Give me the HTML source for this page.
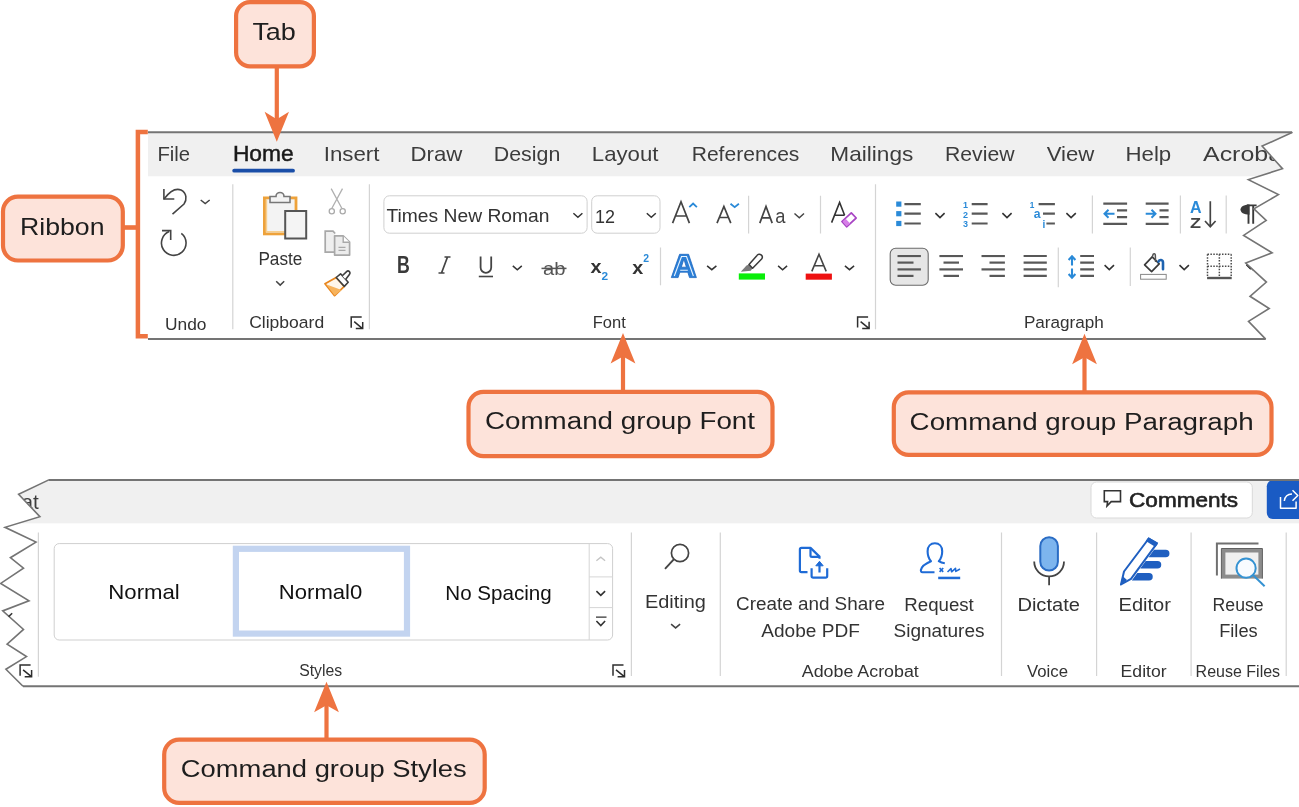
<!DOCTYPE html>
<html><head><meta charset="utf-8"><style>
html,body{margin:0;padding:0;background:#fff;width:1299px;height:807px;overflow:hidden}
svg{display:block;font-family:"Liberation Sans", sans-serif;will-change:transform}
</style></head><body>
<svg width="1299" height="807" viewBox="0 0 1299 807">
<defs><clipPath id="cpTop"><path d="M148,132.5 L1292.1,132.5 L1262.1,146.1 L1282.5,168.7 L1248.4,179.6 L1278.4,194.6 L1253.9,208.9 L1266.2,220.5 L1243.6,235.4 L1272.1,252.8 L1245.7,263.1 L1266.4,282.1 L1250,296.3 L1269.2,308.5 L1248.5,321.3 L1265.7,339.1 L148,339.1 Z"/></clipPath>
<clipPath id="cpBot"><path d="M1299,480.1 L48.3,480.1 L18.6,494.2 L39.9,516.7 L5.0,527.3 L36,542.1 L10.4,557.7 L23.5,568.1 L0.7,583.4 L29,600.8 L2.7,610.9 L23.5,629.4 L7.1,644.2 L26.5,656.6 L5.9,669.2 L23,686.3 L1299,686.3 Z"/></clipPath></defs>
<g clip-path="url(#cpTop)">
<rect x="148" y="132.5" width="1160" height="44" fill="#f0f0f0"/>
<rect x="148" y="176.5" width="1160" height="163" fill="#ffffff"/>
<text x="157.4" y="160.5" font-size="20.67" textLength="32.7" lengthAdjust="spacingAndGlyphs" fill="#3c3c3c">File</text>
<text x="232.9" y="160.7" font-size="21.37" textLength="60.8" lengthAdjust="spacingAndGlyphs" fill="#1a1a1a" stroke="#1a1a1a" stroke-width="0.45">Home</text>
<text x="323.7" y="160.5" font-size="20.67" textLength="55.8" lengthAdjust="spacingAndGlyphs" fill="#3c3c3c">Insert</text>
<text x="410.5" y="160.5" font-size="20.67" textLength="51.9" lengthAdjust="spacingAndGlyphs" fill="#3c3c3c">Draw</text>
<text x="493.7" y="160.5" font-size="20.67" textLength="66.6" lengthAdjust="spacingAndGlyphs" fill="#3c3c3c">Design</text>
<text x="591.8" y="160.5" font-size="20.67" textLength="66.7" lengthAdjust="spacingAndGlyphs" fill="#3c3c3c">Layout</text>
<text x="691.7" y="160.5" font-size="20.67" textLength="107.7" lengthAdjust="spacingAndGlyphs" fill="#3c3c3c">References</text>
<text x="830.3" y="160.5" font-size="20.67" textLength="83.0" lengthAdjust="spacingAndGlyphs" fill="#3c3c3c">Mailings</text>
<text x="945.0" y="160.5" font-size="20.67" textLength="69.5" lengthAdjust="spacingAndGlyphs" fill="#3c3c3c">Review</text>
<text x="1046.7" y="160.5" font-size="20.67" textLength="47.7" lengthAdjust="spacingAndGlyphs" fill="#3c3c3c">View</text>
<text x="1125.5" y="160.5" font-size="20.67" textLength="45.7" lengthAdjust="spacingAndGlyphs" fill="#3c3c3c">Help</text>
<text x="1203.0" y="160.5" font-size="20.67" textLength="86.0" lengthAdjust="spacingAndGlyphs" fill="#3c3c3c">Acrobat</text>
<rect x="232.3" y="168.8" width="62.6" height="3.8" rx="1.9" fill="#1a4ea8"/>
<path d="M164,199 C170,191 176,188 181,190 C187,193 187,200 184,204 L172.5,214.2" fill="none" stroke="#444" stroke-width="1.6"/>
<path d="M163.9,188.9 V199 H174.3" fill="none" stroke="#444" stroke-width="1.6"/>
<path d="M200.7,200.0 L205.2,203.6 L209.7,200.0" fill="none" stroke="#444" stroke-width="1.5"/>
<path d="M181.3,233.3 A12.3,12.3 0 1 1 169.2,231.6" fill="none" stroke="#444" stroke-width="1.6"/>
<path d="M162,230.6 H170.7 V240" fill="none" stroke="#444" stroke-width="1.6"/>
<text x="165.0" y="329.9" font-size="17.04" textLength="41.5" lengthAdjust="spacingAndGlyphs" fill="#333">Undo</text>
<line x1="232.8" y1="184.2" x2="232.8" y2="329.3" stroke="#d4d4d4" stroke-width="1.2"/>
<rect x="264.4" y="197.9" width="31.6" height="36" fill="#f3f3f3" stroke="#eea23a" stroke-width="2.8"/>
<path d="M266.6,199 V231.7 H285" fill="none" stroke="#f7cf8f" stroke-width="1.2"/>
<path d="M270,202.5 V196.5 H276 A4,4 0 0 1 284,196.5 H290 V202.5 Z" fill="#f3f3f3" stroke="#777" stroke-width="1.6"/>
<rect x="285.2" y="211" width="21" height="27.5" fill="#f4f4f4" stroke="#555" stroke-width="2"/>
<text x="258.4" y="265.2" font-size="18.02" textLength="44.0" lengthAdjust="spacingAndGlyphs" fill="#333">Paste</text>
<path d="M276.2,281.3 L280.2,285.1 L284.2,281.3" fill="none" stroke="#444" stroke-width="1.5"/>
<path d="M331.2,188.6 L341.8,208.3 M342.5,188.6 L331.9,208.3" fill="none" stroke="#b0b0b0" stroke-width="1.3"/>
<circle cx="331.8" cy="211.2" r="2.6" fill="none" stroke="#aaa" stroke-width="1.3"/><circle cx="342.7" cy="211.2" r="2.6" fill="none" stroke="#aaa" stroke-width="1.3"/>
<path d="M334,252.2 H325.2 V231.2 H333 L335.2,233.5" fill="#efefef" stroke="#a8a8a8" stroke-width="1.7"/>
<path d="M334.6,235.9 H343.2 L349.6,242.2 V255.1 H334.6 Z" fill="#ececec" stroke="#a8a8a8" stroke-width="1.7" stroke-linejoin="round"/>
<path d="M343.2,236 V242.3 H349.6" fill="#fff" stroke="#a8a8a8" stroke-width="1.4"/><path d="M338.5,247.3 H345.5 M338.5,250.3 H345.5" stroke="#a8a8a8" stroke-width="1.3"/>
<path d="M325,283.7 L336.2,277.5 L344.3,286.4 L334.6,295.6 Z" fill="#fff6ea" stroke="#e8861e" stroke-width="1.8" stroke-linejoin="round"/>
<path d="M326,284.2 L341.5,290 L334.6,295.6 Z" fill="#f7b35c"/>
<path d="M336.2,277.5 L340.6,273.8 L348.2,282.2 L344.3,286.4 Z" fill="#fff" stroke="#3f3f3f" stroke-width="1.6" stroke-linejoin="round"/>
<path d="M342.3,275.8 L346.6,271.6 A1.7,1.7 0 0 1 349.4,274.4 L345.6,279.4" fill="#fff" stroke="#3f3f3f" stroke-width="1.6" stroke-linejoin="round"/>
<text x="249.2" y="327.9" font-size="16.76" textLength="75.0" lengthAdjust="spacingAndGlyphs" fill="#333">Clipboard</text>
<path d="M351.2,327.70000000000005 V317.0 H361.7" fill="none" stroke="#2e2e2e" stroke-width="1.5"/>
<path d="M354.2,321.70000000000005 L362.2,328.3 M362.7,321.90000000000003 V328.6 H355.79999999999995" fill="none" stroke="#2e2e2e" stroke-width="1.5"/>
<line x1="369.4" y1="184.2" x2="369.4" y2="329.3" stroke="#d4d4d4" stroke-width="1.2"/>
<rect x="383.9" y="195.8" width="203.2" height="37.4" rx="5.5" fill="#fff" stroke="#cfcfcf" stroke-width="1"/>
<text x="386.5" y="222.4" font-size="19.27" textLength="163.0" lengthAdjust="spacingAndGlyphs" fill="#333">Times New Roman</text>
<path d="M573.4,213.2 L577.9,217.2 L582.4,213.2" fill="none" stroke="#333" stroke-width="1.5"/>
<rect x="591.7" y="195.8" width="68.3" height="37.4" rx="5.5" fill="#fff" stroke="#cfcfcf" stroke-width="1"/>
<text x="594.9" y="222.6" font-size="19.27" textLength="20.0" lengthAdjust="spacingAndGlyphs" fill="#333">12</text>
<path d="M646.8,213.2 L651.3,217.2 L655.8,213.2" fill="none" stroke="#333" stroke-width="1.5"/>
<path d="M672.6,223.1 L681,201.8 L689.4,223.1 M675.5,216 H686.5" fill="none" stroke="#444" stroke-width="1.7"/>
<path d="M689.3,207.2 L693.1,203.5 L696.9,207.2" fill="none" stroke="#2a8ad8" stroke-width="1.8"/>
<path d="M717,223.1 L723.9,206.4 L730.8,223.1 M719.3,217.5 H728.5" fill="none" stroke="#444" stroke-width="1.7"/>
<path d="M730.5,203.7 L734.7,207.2 L738.9,203.7" fill="none" stroke="#2a8ad8" stroke-width="1.8"/>
<line x1="748.6" y1="195.7" x2="748.6" y2="233.6" stroke="#d4d4d4" stroke-width="1.2"/>
<path d="M759.8,223.1 L766,206.4 L772.2,223.1 M761.8,217.8 H770.2" fill="none" stroke="#444" stroke-width="1.7"/>
<text x="775.2" y="223.1" font-size="20.50" textLength="10.2" lengthAdjust="spacingAndGlyphs" fill="#444">a</text>
<path d="M794.5,213.5 L799.3,217.7 L804.0,213.5" fill="none" stroke="#444" stroke-width="1.5"/>
<line x1="820.5" y1="195.7" x2="820.5" y2="233.6" stroke="#d4d4d4" stroke-width="1.2"/>
<path d="M831.6,222.6 L839.6,202.5 L844.6,215.2 M834.6,215.2 H844.6" fill="none" stroke="#333" stroke-width="1.6"/>
<path d="M841.9,221.5 L851.3,212.8 L856.2,218 L846.6,226.8 Z" fill="#fff" stroke="#a845c4" stroke-width="1.7" stroke-linejoin="round"/>
<path d="M842.6,221.5 L845.6,218.7 L850.2,223.6 L846.6,226.3 Z" fill="#d77ee8"/>
<text x="397.0" y="273.3" font-size="23.18" textLength="12.8" lengthAdjust="spacingAndGlyphs" font-weight="bold" fill="#3a3a3a">B</text>
<path d="M444.5,257 H450.5 M438.5,273 H444.5 M447.5,257 L441.5,273" fill="none" stroke="#444" stroke-width="1.7"/>
<path d="M480.6,256.6 V267.5 A5.3,5.3 0 0 0 491.2,267.5 V256.6" fill="none" stroke="#444" stroke-width="1.8"/>
<path d="M478.8,276.5 H493" stroke="#444" stroke-width="1.6"/>
<path d="M512.8,265.9 L517.3,269.7 L521.8,265.9" fill="none" stroke="#333" stroke-width="1.5"/>
<text x="543.0" y="275.0" font-size="19.00" textLength="22.5" lengthAdjust="spacingAndGlyphs" fill="#555">ab</text>
<path d="M541.5,268.4 H566.5" stroke="#555" stroke-width="1.5"/>
<text x="590.4" y="273.4" font-size="19.00" textLength="11.0" lengthAdjust="spacingAndGlyphs" font-weight="bold" fill="#333">x</text>
<text x="601.6" y="279.7" font-size="11.50" textLength="6.6" lengthAdjust="spacingAndGlyphs" font-weight="bold" fill="#2a8ad8">2</text>
<text x="632.2" y="273.6" font-size="19.00" textLength="11.0" lengthAdjust="spacingAndGlyphs" font-weight="bold" fill="#333">x</text>
<text x="643.3" y="262.2" font-size="10.50" textLength="5.8" lengthAdjust="spacingAndGlyphs" font-weight="bold" fill="#2a8ad8">2</text>
<line x1="660.5" y1="247.4" x2="660.5" y2="285.3" stroke="#d4d4d4" stroke-width="1.2"/>
<path d="M671.3,277.6 L679.6,254.3 H688.6 L696.4,277.6 H689.5 L687.8,272.2 H679.8 L678.1,277.6 Z M681.3,267.2 H686.4 L683.9,259 Z" fill="#2b7fd6" fill-rule="evenodd" stroke="#1f68c0" stroke-width="0.8"/>
<path d="M674.3,276 L681.5,256.5 H686.5 L693.4,276 M680.2,270.2 H687.8" fill="none" stroke="#e8f3ff" stroke-width="1.1"/>
<path d="M707.1,265.9 L711.8,269.7 L716.4,265.9" fill="none" stroke="#333" stroke-width="1.5"/>
<path d="M740.8,271.7 L746.5,265.6 L749,264.4 L752.6,268.2 L750.8,270.8 Z" fill="#7a7a7a"/>
<path d="M749,264.4 L757,255.4 A2.9,2.9 0 0 1 761.6,259 L752.6,268.2 Z" fill="#fff" stroke="#3a3a3a" stroke-width="1.5" stroke-linejoin="round"/>
<rect x="738.8" y="273.4" width="26.2" height="6.2" fill="#08ee08"/>
<path d="M778.1,265.9 L782.6,269.7 L787.1,265.9" fill="none" stroke="#333" stroke-width="1.5"/>
<path d="M811.8,271.4 L819,254.3 L826.2,271.4 M814.2,265.8 H823.8" fill="none" stroke="#444" stroke-width="1.6"/>
<rect x="805.7" y="273.6" width="26.2" height="6.1" fill="#ee1111"/>
<path d="M844.9,265.9 L849.5,269.7 L854.1,265.9" fill="none" stroke="#333" stroke-width="1.5"/>
<text x="592.8" y="328.0" font-size="16.76" textLength="33.0" lengthAdjust="spacingAndGlyphs" fill="#333">Font</text>
<path d="M857.5999999999999,327.6 V316.9 H868.0999999999999" fill="none" stroke="#2e2e2e" stroke-width="1.5"/>
<path d="M860.5999999999999,321.6 L868.5999999999999,328.2 M869.0999999999999,321.8 V328.5 H862.1999999999999" fill="none" stroke="#2e2e2e" stroke-width="1.5"/>
<line x1="875.5" y1="184.2" x2="875.5" y2="329.3" stroke="#d4d4d4" stroke-width="1.2"/>
<rect x="896.2" y="201.5" width="5.2" height="5.2" fill="#2a8ad8"/>
<rect x="896.2" y="211.1" width="5.2" height="5.2" fill="#2a8ad8"/>
<rect x="896.2" y="220.9" width="5.2" height="5.2" fill="#2a8ad8"/>
<path d="M904.4,204.1 H920.8" stroke="#585858" stroke-width="2.2"/>
<path d="M904.4,213.7 H920.8" stroke="#585858" stroke-width="2.2"/>
<path d="M904.4,223.5 H920.8" stroke="#585858" stroke-width="2.2"/>
<path d="M935.4,213.1 L940.0,217.6 L944.6,213.1" fill="none" stroke="#333" stroke-width="1.6"/>
<text x="963.1" y="207.8" font-size="9.40" textLength="5.0" lengthAdjust="spacingAndGlyphs" font-weight="bold" fill="#2a8ad8">1</text>
<text x="963.1" y="217.6" font-size="9.40" textLength="5.0" lengthAdjust="spacingAndGlyphs" font-weight="bold" fill="#2a8ad8">2</text>
<text x="963.1" y="227.4" font-size="9.40" textLength="5.0" lengthAdjust="spacingAndGlyphs" font-weight="bold" fill="#2a8ad8">3</text>
<path d="M971.7,204.1 H987.6" stroke="#585858" stroke-width="2.2"/>
<path d="M971.7,213.7 H987.6" stroke="#585858" stroke-width="2.2"/>
<path d="M971.7,223.5 H987.6" stroke="#585858" stroke-width="2.2"/>
<path d="M1002.4,213.1 L1007.0,217.6 L1011.6,213.1" fill="none" stroke="#333" stroke-width="1.6"/>
<text x="1029.8" y="207.9" font-size="9.40" textLength="4.6" lengthAdjust="spacingAndGlyphs" font-weight="bold" fill="#2a8ad8">1</text>
<text x="1033.8" y="217.7" font-size="12.00" textLength="6.8" lengthAdjust="spacingAndGlyphs" font-weight="bold" fill="#2a8ad8">a</text>
<text x="1042.6" y="227.5" font-size="11.00" textLength="2.8" lengthAdjust="spacingAndGlyphs" font-weight="bold" fill="#2a8ad8">i</text>
<path d="M1038.6,204.1 H1054.9" stroke="#585858" stroke-width="2.2"/>
<path d="M1043,213.7 H1054.9" stroke="#585858" stroke-width="2.2"/>
<path d="M1046.4,223.5 H1054.9" stroke="#585858" stroke-width="2.2"/>
<path d="M1066.4,213.1 L1071.1,217.6 L1075.8,213.1" fill="none" stroke="#333" stroke-width="1.6"/>
<line x1="1092.4" y1="195.5" x2="1092.4" y2="233.5" stroke="#d4d4d4" stroke-width="1.2"/>
<path d="M1103.3,203.6 H1127.1" stroke="#585858" stroke-width="2.2"/>
<path d="M1103.3,223.8 H1127.1" stroke="#585858" stroke-width="2.2"/>
<path d="M1117,210.3 H1127.1" stroke="#585858" stroke-width="2.2"/>
<path d="M1117,217.1 H1127.1" stroke="#585858" stroke-width="2.2"/>
<path d="M1104.5,213.7 H1114.5 M1108.5,209.7 L1104.5,213.7 L1108.5,217.7" fill="none" stroke="#2a8ad8" stroke-width="2"/>
<path d="M1145.7,203.6 H1168.6" stroke="#585858" stroke-width="2.2"/>
<path d="M1145.7,223.8 H1168.6" stroke="#585858" stroke-width="2.2"/>
<path d="M1159.5,210.3 H1168.6" stroke="#585858" stroke-width="2.2"/>
<path d="M1159.5,217.1 H1168.6" stroke="#585858" stroke-width="2.2"/>
<path d="M1145.7,213.7 H1155.5 M1151.5,209.7 L1155.5,213.7 L1151.5,217.7" fill="none" stroke="#2a8ad8" stroke-width="2"/>
<line x1="1180.4" y1="195.5" x2="1180.4" y2="233.5" stroke="#d4d4d4" stroke-width="1.2"/>
<text x="1189.9" y="213.3" font-size="16.80" textLength="11.6" lengthAdjust="spacingAndGlyphs" font-weight="bold" fill="#2a8ad8">A</text>
<text x="1190.0" y="227.8" font-size="15.00" textLength="11.0" lengthAdjust="spacingAndGlyphs" font-weight="bold" fill="#444">Z</text>
<path d="M1210.3,201.2 V226.5 M1205,221 L1210.3,226.8 L1215.6,221" fill="none" stroke="#444" stroke-width="1.7"/>
<line x1="1226.2" y1="195.5" x2="1226.2" y2="233.5" stroke="#d4d4d4" stroke-width="1.2"/>
<path d="M1249.5,204.4 C1243.6,204.4 1240.5,206.8 1240.5,209.6 C1240.5,212.5 1243.6,214.8 1249.5,214.8 Z" fill="#3a3a3a"/>
<path d="M1247,205.4 H1256.6 M1248.5,205 V223.8 M1253.2,205 V223.8" fill="none" stroke="#3a3a3a" stroke-width="1.9"/>
<rect x="890.2" y="248.2" width="38" height="37.1" rx="5.5" fill="#e6e6e6" stroke="#6a6a6a" stroke-width="1.1"/>
<path d="M897.5,256 H920.9" stroke="#585858" stroke-width="2.2"/>
<path d="M897.5,269.4 H920.9" stroke="#585858" stroke-width="2.2"/>
<path d="M897.5,262.6 H913.5" stroke="#585858" stroke-width="2.2"/>
<path d="M897.5,275.9 H913.5" stroke="#585858" stroke-width="2.2"/>
<path d="M939.4,256 H963" stroke="#585858" stroke-width="2.2"/>
<path d="M939.4,269.4 H963" stroke="#585858" stroke-width="2.2"/>
<path d="M943.5,262.6 H959" stroke="#585858" stroke-width="2.2"/>
<path d="M943.5,275.9 H959" stroke="#585858" stroke-width="2.2"/>
<path d="M981.5,256 H1004.9" stroke="#585858" stroke-width="2.2"/>
<path d="M981.5,269.4 H1004.9" stroke="#585858" stroke-width="2.2"/>
<path d="M989.5,262.6 H1004.9" stroke="#585858" stroke-width="2.2"/>
<path d="M989.5,275.9 H1004.9" stroke="#585858" stroke-width="2.2"/>
<path d="M1023.6,256 H1046.8" stroke="#585858" stroke-width="2.2"/>
<path d="M1023.6,262.6 H1046.8" stroke="#585858" stroke-width="2.2"/>
<path d="M1023.6,269.4 H1046.8" stroke="#585858" stroke-width="2.2"/>
<path d="M1023.6,275.9 H1046.8" stroke="#585858" stroke-width="2.2"/>
<line x1="1058.3" y1="247.4" x2="1058.3" y2="287.2" stroke="#d4d4d4" stroke-width="1.2"/>
<path d="M1080.2,256 H1094" stroke="#585858" stroke-width="2.2"/>
<path d="M1080.2,262.6 H1094" stroke="#585858" stroke-width="2.2"/>
<path d="M1080.2,269.4 H1094" stroke="#585858" stroke-width="2.2"/>
<path d="M1080.2,275.9 H1094" stroke="#585858" stroke-width="2.2"/>
<path d="M1072,257 V265.4 M1072,268.4 V277 M1068.6,260 L1072,256.4 L1075.4,260 M1068.6,274 L1072,277.6 L1075.4,274" fill="none" stroke="#2a8ad8" stroke-width="2.1"/>
<path d="M1104.6,265.1 L1109.3,269.6 L1114.0,265.1" fill="none" stroke="#333" stroke-width="1.6"/>
<line x1="1130.3" y1="247.4" x2="1130.3" y2="286" stroke="#d4d4d4" stroke-width="1.2"/>
<path d="M1144.6,264.9 L1152.2,256.9 L1159.2,263.8 L1151.6,271.6 Z" fill="#fff" stroke="#3a3a3a" stroke-width="1.7" stroke-linejoin="round"/>
<path d="M1152.2,256.9 L1153.2,254.2 A1.2,1.2 0 0 1 1155.3,254.6 L1155.6,262" fill="none" stroke="#555" stroke-width="1.5"/>
<path d="M1158.4,261.6 C1159.6,259.2 1162.9,259.4 1163,262.5 V269.2" fill="none" stroke="#1e63b0" stroke-width="2.6" stroke-linecap="round"/>
<rect x="1140.6" y="274.4" width="25.6" height="4.8" fill="#fff" stroke="#888" stroke-width="1"/>
<path d="M1179.5,265.1 L1184.2,269.6 L1188.9,265.1" fill="none" stroke="#333" stroke-width="1.6"/>
<path d="M1207.5,254.3 H1231.2 M1207.5,266.2 H1231.2 M1207.5,254.3 V277 M1219.35,254.3 V277 M1231.2,254.3 V277" fill="none" stroke="#4a4a4a" stroke-width="1.5" stroke-dasharray="1.5,1.4"/>
<rect x="1207.1" y="276.8" width="24.6" height="2.4" fill="#555"/>
<path d="M1248.3,265.1 L1253.0,269.6 L1257.7,265.1" fill="none" stroke="#333" stroke-width="1.6"/>
<path d="M1246.5,264.5 L1251,269" stroke="#222" stroke-width="1.8"/>
<text x="1023.9" y="327.8" font-size="16.76" textLength="80.0" lengthAdjust="spacingAndGlyphs" fill="#333">Paragraph</text>
</g>
<path d="M148,132.3 H1292.1" fill="none" stroke="#747474" stroke-width="2"/>
<path d="M148,339.1 H1265.7" fill="none" stroke="#747474" stroke-width="2"/>
<path d="M1292.1,132.3 L1292.1,132.5 L1262.1,146.1 L1282.5,168.7 L1248.4,179.6 L1278.4,194.6 L1253.9,208.9 L1266.2,220.5 L1243.6,235.4 L1272.1,252.8 L1245.7,263.1 L1266.4,282.1 L1250,296.3 L1269.2,308.5 L1248.5,321.3 L1265.7,339.1" fill="none" stroke="#747474" stroke-width="1.6" stroke-linejoin="miter"/>
<g clip-path="url(#cpBot)">
<rect x="0" y="480.1" width="1299" height="43.5" fill="#f0f0f0"/>
<rect x="0" y="523.6" width="1299" height="163" fill="#ffffff"/>
<text x="21.5" y="508.5" font-size="20.67" textLength="17.3" lengthAdjust="spacingAndGlyphs" fill="#3c3c3c">at</text>
<line x1="38.4" y1="532.5" x2="38.4" y2="676.7" stroke="#d4d4d4" stroke-width="1.2"/>
<path d="M20.1,675.8000000000001 V665.1 H30.6" fill="none" stroke="#2e2e2e" stroke-width="1.5"/>
<path d="M23.1,669.8000000000001 L31.1,676.4000000000001 M31.6,670.0 V676.7 H24.700000000000003" fill="none" stroke="#2e2e2e" stroke-width="1.5"/>
<rect x="54.2" y="543.6" width="558.4" height="96.4" rx="5" fill="#fff" stroke="#cfcfcf" stroke-width="1"/>
<rect x="235.9" y="548.8" width="171.1" height="84.8" fill="#fff" stroke="#c3d4f0" stroke-width="6.2"/>
<text x="108.3" y="598.8" font-size="20.25" textLength="71.5" lengthAdjust="spacingAndGlyphs" fill="#111">Normal</text>
<text x="278.8" y="599.3" font-size="20.25" textLength="83.5" lengthAdjust="spacingAndGlyphs" fill="#111">Normal0</text>
<text x="445.3" y="599.5" font-size="20.25" textLength="106.5" lengthAdjust="spacingAndGlyphs" fill="#111">No Spacing</text>
<path d="M589.2,544 V640 M589.2,576.9 H612.6 M589.2,607.6 H612.6" stroke="#d6d6d6" stroke-width="1"/>
<path d="M596.4,560.8 L600.8,557.2 L605.1,560.8" fill="none" stroke="#c4c4c4" stroke-width="1.3"/>
<path d="M596.4,591.1 L600.8,595.4 L605.1,591.1" fill="none" stroke="#333" stroke-width="1.6"/>
<path d="M596,617.2 H606.5" stroke="#333" stroke-width="1.3"/>
<path d="M596.4,621.0 L600.8,625.6 L605.1,621.0" fill="none" stroke="#333" stroke-width="1.6"/>
<text x="299.2" y="676.4" font-size="16.76" textLength="43.0" lengthAdjust="spacingAndGlyphs" fill="#333">Styles</text>
<path d="M613.0,675.8000000000001 V665.1 H623.5" fill="none" stroke="#2e2e2e" stroke-width="1.5"/>
<path d="M616.0,669.8000000000001 L624.0,676.4000000000001 M624.5,670.0 V676.7 H617.6" fill="none" stroke="#2e2e2e" stroke-width="1.5"/>
<line x1="631.4" y1="532.5" x2="631.4" y2="676" stroke="#d4d4d4" stroke-width="1.2"/>
<circle cx="680" cy="553" r="8.6" fill="none" stroke="#444" stroke-width="1.7"/>
<path d="M674,559.2 L665,568.8" stroke="#444" stroke-width="1.9"/>
<text x="644.9" y="608.0" font-size="18.58" textLength="61.0" lengthAdjust="spacingAndGlyphs" fill="#333">Editing</text>
<path d="M671.1,624.1 L675.6,627.9 L680.1,624.1" fill="none" stroke="#444" stroke-width="1.5"/>
<line x1="720.3" y1="532.5" x2="720.3" y2="676" stroke="#d4d4d4" stroke-width="1.2"/>
<path d="M807.5,572.2 H801.5 Q799.9,572.2 799.9,570.6 V549.5 Q799.9,547.9 801.5,547.9 H810.5 L819.5,556.6 V558.7" fill="none" stroke="#1f6bd6" stroke-width="2.2" stroke-linejoin="round"/>
<path d="M810.5,548.2 V555.5 Q810.5,556.9 812,556.9 H819.3" fill="none" stroke="#1f6bd6" stroke-width="2.2"/>
<path d="M811.6,568.2 V576 Q811.6,577.6 813.2,577.6 H825.6 Q827.2,577.6 827.2,576 V568.2 M819.5,572.4 V564" fill="none" stroke="#1f6bd6" stroke-width="2.2" stroke-linejoin="round"/>
<path d="M815.8,565.8 L819.5,561.3 L823.2,565.8 Z" fill="#1f6bd6" stroke="#1f6bd6" stroke-width="1" stroke-linejoin="round"/>
<text x="736.0" y="610.1" font-size="18.30" textLength="149.0" lengthAdjust="spacingAndGlyphs" fill="#333">Create and Share</text>
<text x="761.3" y="636.5" font-size="18.30" textLength="98.5" lengthAdjust="spacingAndGlyphs" fill="#333">Adobe PDF</text>
<path d="M934.5,572.2 H922.5 Q920.6,572.2 920.9,570 C921.5,566 925.5,563.5 931,561.2 C928.6,558.6 927.6,555 927.6,551.3 C927.6,546.3 930.6,543.3 934.9,543.3 C939.2,543.3 942.2,546.3 942.2,551.3 C942.2,555 941.2,558.6 938.8,561.2 C940.6,562.4 942.6,563 944.8,563.3" fill="none" stroke="#1f6bd6" stroke-width="2.1" stroke-linejoin="round"/>
<path d="M939.6,568 L943.2,571.8 M943.2,568 L939.6,571.8" stroke="#1f6bd6" stroke-width="1.7"/>
<path d="M947.5,572 L951,568.6 L951.6,571.8 L955.5,568.4 L955.8,571.4 L960,569" fill="none" stroke="#1f6bd6" stroke-width="1.6" stroke-linejoin="round"/>
<rect x="938.2" y="576.7" width="22" height="2.5" fill="#1f6bd6"/>
<text x="904.3" y="610.5" font-size="18.30" textLength="69.5" lengthAdjust="spacingAndGlyphs" fill="#333">Request</text>
<text x="893.5" y="636.5" font-size="18.30" textLength="91.0" lengthAdjust="spacingAndGlyphs" fill="#333">Signatures</text>
<text x="801.8" y="677.0" font-size="15.64" textLength="117.0" lengthAdjust="spacingAndGlyphs" fill="#333">Adobe Acrobat</text>
<line x1="1001.5" y1="532.5" x2="1001.5" y2="676" stroke="#d4d4d4" stroke-width="1.2"/>
<rect x="1040.3" y="537.2" width="17.6" height="33.4" rx="8.8" fill="#7db5ee" stroke="#2a6cc4" stroke-width="2"/>
<path d="M1034.2,561.5 A14.9,14.9 0 0 0 1064,561.5 M1049.1,576.5 V585.3" fill="none" stroke="#444" stroke-width="1.8"/>
<text x="1017.4" y="610.5" font-size="18.30" textLength="62.5" lengthAdjust="spacingAndGlyphs" fill="#333">Dictate</text>
<text x="1027.0" y="677.3" font-size="15.64" textLength="41.0" lengthAdjust="spacingAndGlyphs" fill="#333">Voice</text>
<line x1="1096.6" y1="532.5" x2="1096.6" y2="676" stroke="#d4d4d4" stroke-width="1.2"/>
<path d="M1121,584.5 L1124,571.5 L1148.8,538.5 L1156.8,543.6 L1131,578.8 Z" fill="#fff" stroke="#1f5fc0" stroke-width="2" stroke-linejoin="round"/>
<path d="M1120.3,585.5 L1122.5,576 L1127,580 Z" fill="#1f5fc0"/>
<path d="M1148.3,537.2 L1158.2,542.8 L1155.5,547 L1145.8,541 Z" fill="#1f5fc0"/>
<path d="M1154,549.8 H1165.7 A3.75,3.75 0 0 1 1165.7,557.3 H1148.5 Z M1145.7,561 H1157.5 A3.75,3.75 0 0 1 1157.5,568.5 H1140.2 Z M1137.3,572.9 H1149 A3.75,3.75 0 0 1 1149,580.4 H1131.8 Z" fill="#1f5fc0"/>
<text x="1118.5" y="610.5" font-size="18.30" textLength="52.5" lengthAdjust="spacingAndGlyphs" fill="#333">Editor</text>
<text x="1120.6" y="677.3" font-size="15.64" textLength="46.0" lengthAdjust="spacingAndGlyphs" fill="#333">Editor</text>
<line x1="1191.1" y1="532.5" x2="1191.1" y2="676" stroke="#d4d4d4" stroke-width="1.2"/>
<path d="M1216.9,575.5 V543.6 H1258.5" fill="none" stroke="#707070" stroke-width="2"/>
<rect x="1223.4" y="550.5" width="37" height="26.1" fill="#f0f0f0" stroke="#8c8c8c" stroke-width="4"/>
<path d="M1221.4,578.6 V548.5 H1262.4 V578.6" fill="none" stroke="#606060" stroke-width="1"/>
<circle cx="1246.1" cy="568.2" r="9.6" fill="#f8fbff" stroke="#3592d2" stroke-width="2"/>
<path d="M1253.3,575.2 L1264.6,586.2" stroke="#3592d2" stroke-width="2"/>
<text x="1212.6" y="610.5" font-size="18.30" textLength="51.0" lengthAdjust="spacingAndGlyphs" fill="#333">Reuse</text>
<text x="1219.2" y="636.5" font-size="18.30" textLength="38.5" lengthAdjust="spacingAndGlyphs" fill="#333">Files</text>
<text x="1195.6" y="677.3" font-size="15.64" textLength="84.5" lengthAdjust="spacingAndGlyphs" fill="#333">Reuse Files</text>
<line x1="1286.2" y1="532.5" x2="1286.2" y2="676" stroke="#d4d4d4" stroke-width="1.2"/>
<rect x="1091" y="482" width="161.3" height="36" rx="5.5" fill="#fff" stroke="#d9d9d9" stroke-width="1"/>
<path d="M1104.3,490.8 H1120.5 V501.6 H1111.2 L1107,506 L1107.6,501.6 H1104.3 Z" fill="none" stroke="#333" stroke-width="1.6" stroke-linejoin="miter"/>
<text x="1129.1" y="506.7" font-size="20.67" textLength="109.0" lengthAdjust="spacingAndGlyphs" fill="#222" stroke="#222" stroke-width="0.6">Comments</text>
<rect x="1266.8" y="480.3" width="50" height="38.6" rx="6" fill="#1a5bc4"/>
<path d="M1280.5,497.1 V508.2 H1296.1 V501.4 M1284.3,501 C1285,496 1287.5,494 1292,494 M1292.5,490.2 L1297.8,495.5 L1292.5,500.8" fill="none" stroke="#fff" stroke-width="1.5" stroke-linejoin="round"/>
</g>
<path d="M48.3,480.1 H1299" fill="none" stroke="#747474" stroke-width="2"/>
<path d="M23,686.3 H1299" fill="none" stroke="#747474" stroke-width="2"/>
<path d="M48.3,480.1 L18.6,494.2 L39.9,516.7 L5.0,527.3 L36,542.1 L10.4,557.7 L23.5,568.1 L0.7,583.4 L29,600.8 L2.7,610.9 L23.5,629.4 L7.1,644.2 L26.5,656.6 L5.9,669.2 L23,686.3" fill="none" stroke="#747474" stroke-width="1.6" stroke-linejoin="miter"/>
<path d="M8.6,616.6 L12.2,613.2" stroke="#333" stroke-width="1.5"/>
<rect x="236.1" y="2.1" width="77.8" height="64.3" rx="13.9" fill="#fde3da" stroke="#ee7340" stroke-width="4.2"/>
<text x="252.4" y="40.0" font-size="23.46" textLength="43.5" lengthAdjust="spacingAndGlyphs" fill="#1e1e1e">Tab</text>
<line x1="276.8" y1="67" x2="276.8" y2="119.69999999999999" stroke="#ee7340" stroke-width="4.2"/>
<path d="M276.8,141.7 L289.0,111.69999999999999 L276.8,119.19999999999999 L264.6,111.69999999999999 Z" fill="#ee7340"/>
<rect x="3.0" y="196.6" width="119.8" height="63.9" rx="14.9" fill="#fde3da" stroke="#ee7340" stroke-width="4.2"/>
<text x="20.0" y="234.6" font-size="24.16" textLength="84.5" lengthAdjust="spacingAndGlyphs" fill="#1e1e1e">Ribbon</text>
<path d="M124,227.5 H137.9" stroke="#ee7340" stroke-width="4.6"/>
<path d="M147.8,132 H137.9 V336.3 H147.8" fill="none" stroke="#ee7340" stroke-width="4.5"/>
<rect x="468.5" y="391.8" width="304.0" height="64.4" rx="14.9" fill="#fde3da" stroke="#ee7340" stroke-width="4.2"/>
<text x="485.0" y="429.0" font-size="23.04" textLength="270.0" lengthAdjust="spacingAndGlyphs" fill="#1e1e1e">Command group Font</text>
<line x1="623" y1="355" x2="623" y2="391" stroke="#ee7340" stroke-width="4.2"/>
<path d="M623,333 L635.4,363.5 L623,356.5 L610.6,363.5 Z" fill="#ee7340"/>
<rect x="893.8" y="392.4" width="377.7" height="62.5" rx="14.9" fill="#fde3da" stroke="#ee7340" stroke-width="4.2"/>
<text x="909.6" y="429.8" font-size="23.04" textLength="344.0" lengthAdjust="spacingAndGlyphs" fill="#1e1e1e">Command group Paragraph</text>
<line x1="1084.5" y1="355.8" x2="1084.5" y2="391" stroke="#ee7340" stroke-width="4.2"/>
<path d="M1084.5,333.8 L1096.9,364.3 L1084.5,357.3 L1072.1,364.3 Z" fill="#ee7340"/>
<rect x="164.2" y="739.6" width="320.5" height="63.2" rx="14.9" fill="#fde3da" stroke="#ee7340" stroke-width="4.2"/>
<text x="180.8" y="776.9" font-size="23.04" textLength="286.0" lengthAdjust="spacingAndGlyphs" fill="#1e1e1e">Command group Styles</text>
<line x1="326.5" y1="703.7" x2="326.5" y2="739" stroke="#ee7340" stroke-width="4.2"/>
<path d="M326.5,681.7 L338.9,712.2 L326.5,705.2 L314.1,712.2 Z" fill="#ee7340"/>
</svg></body></html>
